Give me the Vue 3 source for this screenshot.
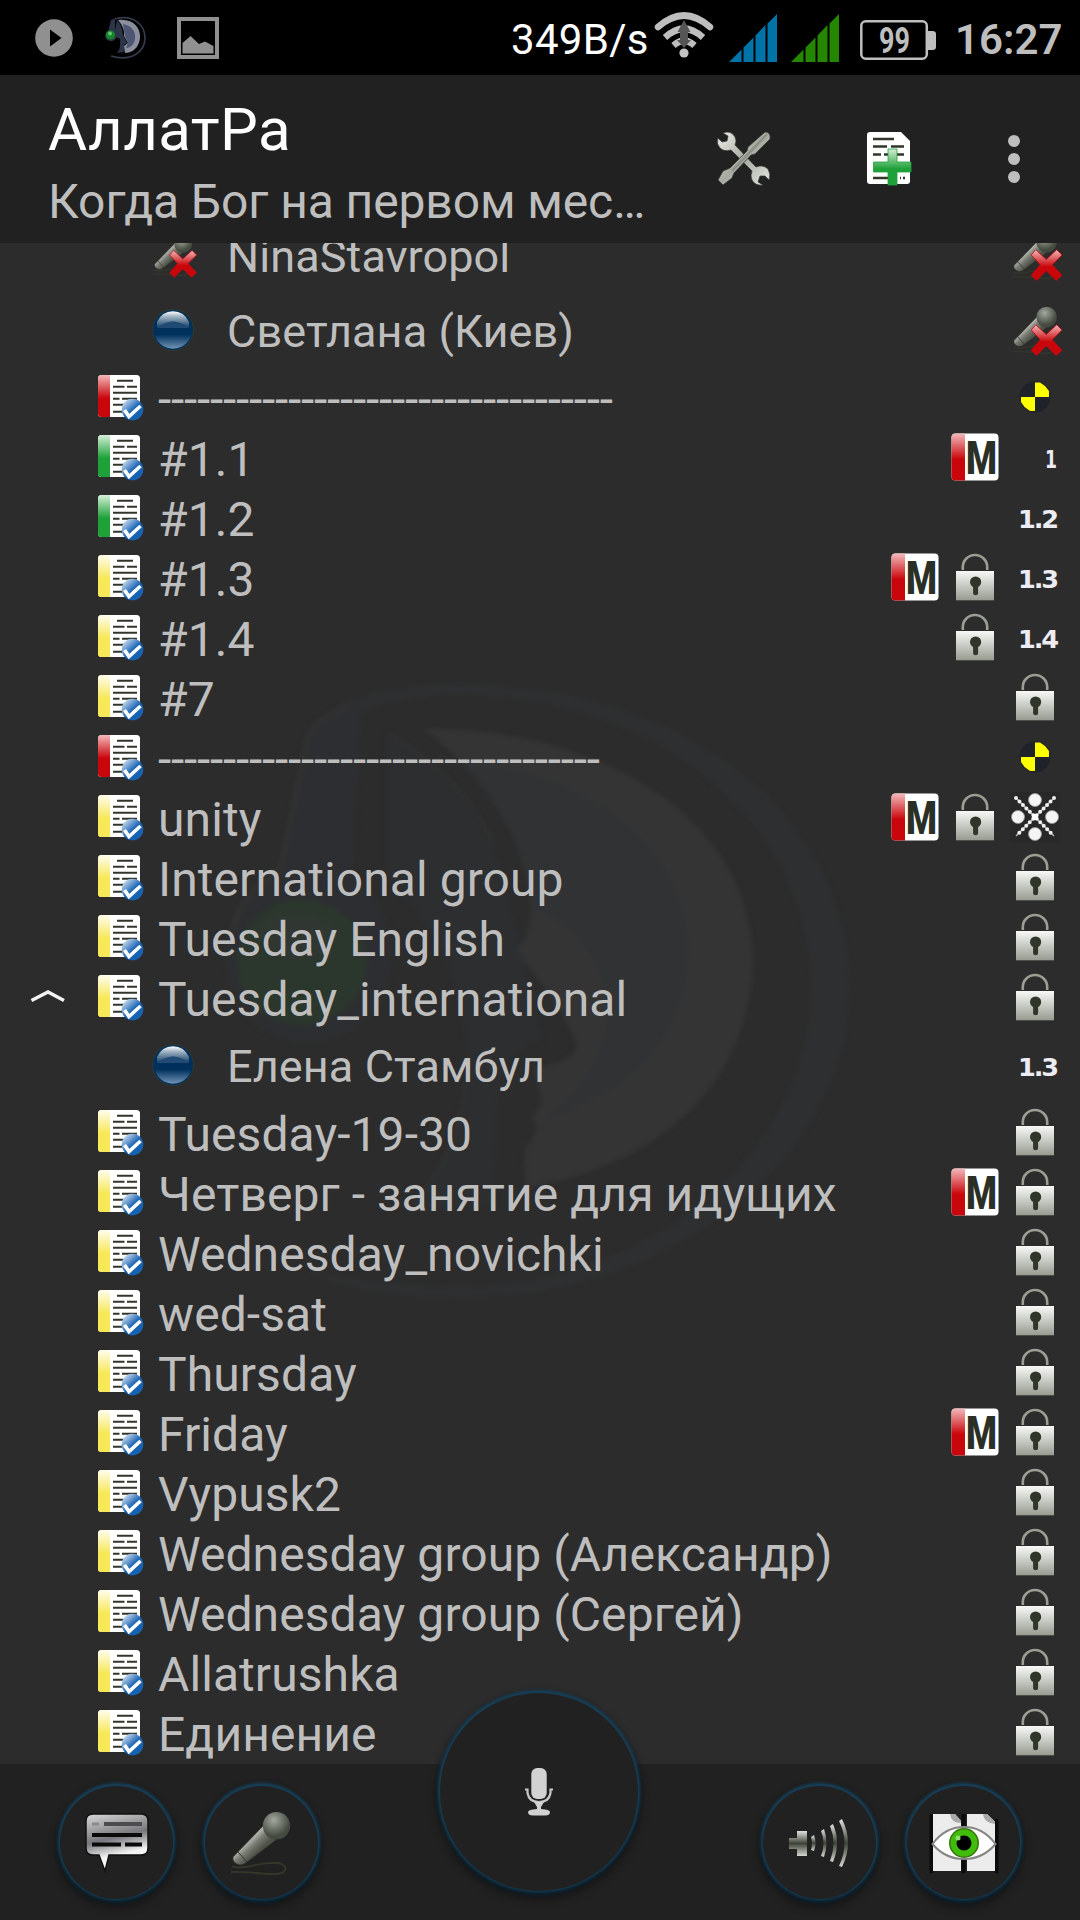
<script setup>
const rows = [
  { user: true, name: 'NinaStavropol', icon: 'muted', right: ['muted'] },
  { user: true, name: 'Светлана (Киев)', icon: 'orb', right: ['muted'] },
  { name: '-'.repeat(35), icon: 'red', right: ['target'], cls: 'dash' },
  { name: '#1.1', icon: 'green', right: ['moderated', 'n:1'] },
  { name: '#1.2', icon: 'green', right: ['n:1.2'] },
  { name: '#1.3', icon: 'yellow', right: ['moderated', 'lock', 'n:1.3'] },
  { name: '#1.4', icon: 'yellow', right: ['lock', 'n:1.4'] },
  { name: '#7', icon: 'yellow', right: ['lock'] },
  { name: '-'.repeat(34), icon: 'red', right: ['target'], cls: 'dash' },
  { name: 'unity', icon: 'yellow', right: ['moderated', 'lock', 'cross'] },
  { name: 'International group', icon: 'yellow', right: ['lock'] },
  { name: 'Tuesday English', icon: 'yellow', right: ['lock'] },
  { name: 'Tuesday_international', icon: 'yellow', right: ['lock'], open: true },
  { user: true, name: 'Елена Стамбул', icon: 'orb', right: ['n:1.3'] },
  { name: 'Tuesday-19-30', icon: 'yellow', right: ['lock'] },
  { name: 'Четверг - занятие для идущих', icon: 'yellow', right: ['moderated', 'lock'] },
  { name: 'Wednesday_novichki', icon: 'yellow', right: ['lock'] },
  { name: 'wed-sat', icon: 'yellow', right: ['lock'] },
  { name: 'Thursday', icon: 'yellow', right: ['lock'] },
  { name: 'Friday', icon: 'yellow', right: ['moderated', 'lock'] },
  { name: 'Vypusk2', icon: 'yellow', right: ['lock'] },
  { name: 'Wednesday group (Александр)', icon: 'yellow', right: ['lock'] },
  { name: 'Wednesday group (Сергей)', icon: 'yellow', right: ['lock'] },
  { name: 'Allatrushka', icon: 'yellow', right: ['lock'] },
  { name: 'Единение', icon: 'yellow', right: ['lock'] },
]
</script>

<template>
  <div class="screen">
    <svg class="defs" width="0" height="0">
      <defs>
        <linearGradient id="g-red" x1="0" y1="0" x2="0" y2="1"><stop offset="0" stop-color="#f3b9bb" /><stop offset=".55" stop-color="#c9060b" /></linearGradient>
        <linearGradient id="g-green" x1="0" y1="0" x2="0" y2="1"><stop offset="0" stop-color="#d6efd9" /><stop offset=".55" stop-color="#1ea139" /></linearGradient>
        <linearGradient id="g-yellow" x1="0" y1="0" x2="0" y2="1"><stop offset="0" stop-color="#fffdf0" /><stop offset=".55" stop-color="#f7e858" /></linearGradient>
        <linearGradient id="g-blue" x1=".15" y1=".1" x2=".8" y2=".8"><stop offset="0" stop-color="#c5d9ef" /><stop offset=".6" stop-color="#1762b2" /></linearGradient>
        <linearGradient id="g-lock" x1="0" y1="0" x2="0" y2="1"><stop offset="0" stop-color="#f8f9f7" /><stop offset="1" stop-color="#979b90" /></linearGradient>
        <linearGradient id="g-gloss" x1="0" y1="0" x2="0" y2="1"><stop offset="0" stop-color="#fff" /><stop offset=".3" stop-color="#fff" stop-opacity=".65" /><stop offset="1" stop-color="#fff" stop-opacity="0.05" /></linearGradient>
        <linearGradient id="g-orb" x1="0" y1="0" x2="0" y2="1"><stop offset="0" stop-color="#00305c" /><stop offset=".62" stop-color="#00305c" /><stop offset="1" stop-color="#7394b4" /></linearGradient>
        <radialGradient id="g-ball" cx=".4" cy=".3" r=".65"><stop offset="0" stop-color="#a3a79d" /><stop offset=".9" stop-color="#444a40" /></radialGradient>
        <linearGradient id="g-body" x1=".3" y1=".35" x2=".6" y2=".65"><stop offset="0" stop-color="#d2d4d0" /><stop offset=".55" stop-color="#777a70" /><stop offset="1" stop-color="#4d5147" /></linearGradient>
        <linearGradient id="g-metal" x1="0" y1="0" x2="1" y2="1"><stop offset="0" stop-color="#f2f2ef" /><stop offset=".5" stop-color="#a5a99f" /><stop offset="1" stop-color="#e6e7e4" /></linearGradient>
        <linearGradient id="g-chat" x1="0" y1="0" x2=".25" y2="1"><stop offset="0" stop-color="#d9d9da" /><stop offset=".5" stop-color="#77777b" /><stop offset=".65" stop-color="#b5b5b8" /><stop offset=".8" stop-color="#f5f5f5" /></linearGradient>
        <linearGradient id="g-spk" x1="0" y1="0" x2="0" y2="1"><stop offset="0" stop-color="#e2e3e0" /><stop offset=".5" stop-color="#3d4338" /><stop offset="1" stop-color="#d5d7d2" /></linearGradient>

        <symbol id="mic" viewBox="0 0 64 64" overflow="visible">
          <path d="M3 55 C10 60 30 51 48 52 C59 53 60 62 47 63 C36 64 22 60 2 61" fill="none" stroke="#34382b" stroke-width="1.8" />
          <path d="M35 14 L47 29 L18 51 Q15 54 11 54 Q3 52 4 46 Z" fill="url(#g-body)" stroke="#30342b" stroke-width=".7" />
          <path d="M9 41 L18 51 M35 14 L47 29" stroke="#30342b" stroke-width="1" />
          <circle cx="47.5" cy="14.8" r="13.7" fill="url(#g-ball)" />
        </symbol>
        <symbol id="muted" viewBox="0 0 64 64" overflow="visible">
          <use href="#mic" width="64" height="64" />
          <path d="M33 25 L47 38 L61 25 L68 32 L55 45 L68 59 L60 66 L47 53 L34 66 L27 59 L39 45 L27 32 Z" fill="url(#g-red)" stroke="#c9060b" stroke-width="1" />
        </symbol>
        <symbol id="orb" viewBox="0 0 42 42" overflow="visible">
          <circle cx="21" cy="21" r="21" fill="#30382e" />
          <circle cx="21" cy="21" r="20" fill="#00305c" />
          <circle cx="21" cy="21" r="18.8" fill="url(#g-orb)" />
          <path d="M5 19 V13 Q10 2.3 21 2.3 Q32 2.3 37 13 V19 Q29 12.5 21 12.5 Q13 12.5 5 19Z" fill="url(#g-gloss)" />
          <path d="M5 19 Q13 12.5 21 12.5 Q29 12.5 37 19Z" fill="#5d7c9d" opacity=".35" />
        </symbol>
        <symbol id="page" viewBox="0 0 46 46" overflow="visible">
          <rect x="0" y="0" width="42" height="42" rx="3.5" fill="#fff" />
          <path d="M19 5.8H35 M15 11.8H26.5M29 11.8H39 M15 17.8H39 M15 23.8H21.5M24 23.8H39 M15 29.8H26 M15 36.8H24" stroke="#31362b" stroke-width="2.1" />
        </symbol>
        <symbol id="tick" viewBox="0 0 46 46" overflow="visible">
          <circle cx="34.5" cy="34.5" r="10.8" fill="url(#g-blue)" />
          <path d="M26.5 35 L31 41.5 L42.5 31" fill="none" stroke="#fff" stroke-width="3.6" />
        </symbol>
        <symbol id="red" viewBox="0 0 46 46" overflow="visible">
          <use href="#page" width="46" height="46" /><path d="M12 0H3.5Q0 0 0 3.5V38.5Q0 42 3.5 42H12Z" fill="url(#g-red)" /><use href="#tick" width="46" height="46" />
        </symbol>
        <symbol id="green" viewBox="0 0 46 46" overflow="visible">
          <use href="#page" width="46" height="46" /><path d="M12 0H3.5Q0 0 0 3.5V38.5Q0 42 3.5 42H12Z" fill="url(#g-green)" /><use href="#tick" width="46" height="46" />
        </symbol>
        <symbol id="yellow" viewBox="0 0 46 46" overflow="visible">
          <use href="#page" width="46" height="46" /><path d="M12 0H3.5Q0 0 0 3.5V38.5Q0 42 3.5 42H12Z" fill="url(#g-yellow)" /><use href="#tick" width="46" height="46" />
        </symbol>
        <symbol id="lock" viewBox="0 0 48 48" overflow="visible">
          <path d="M11.8 17 V14 A12.2 12 0 0 1 36.2 14 V17" fill="none" stroke="#9a9e93" stroke-width="2.6" />
          <rect x="5" y="18" width="38" height="29.3" fill="url(#g-lock)" />
          <circle cx="24.6" cy="29" r="5.6" fill="#31362b" />
          <path d="M24.6 30V39.8" stroke="#31362b" stroke-width="5" stroke-linecap="round" />
        </symbol>
        <symbol id="target" viewBox="0 0 48 48" overflow="visible">
          <circle cx="24" cy="24" r="15.5" fill="#1f2228" />
          <path d="M24 24V9.5H29L34 13L38 18V24Z M24 24V38H19L13.5 34L10 29V24Z" fill="#ff0" />
        </symbol>
        <symbol id="cross" viewBox="0 0 48 48" overflow="visible">
          <rect x="-1" y="-1" width="50" height="50" fill="#222" opacity=".4" />
          <path d="M5 5L43 43M43 5L5 43" stroke="#aaa" stroke-width="1.6" />
          <path d="M5 5L43 43M43 5L5 43" stroke="#eee" stroke-width="4" stroke-dasharray="0 4.9" stroke-linecap="round" />
          <g fill="#f4f4f4" stroke="#999" stroke-width=".8"><circle cx="24" cy="7" r="6.5" /><circle cx="24" cy="41" r="6.5" /><circle cx="7" cy="24" r="6.5" /><circle cx="41" cy="24" r="6.5" /></g>
          <rect x="21" y="21" width="6" height="6" fill="#fff" />
        </symbol>
      </defs>
    </svg>

    <header class="status">
      <svg class="s-play" width="38" height="38" viewBox="0 0 38 38"><circle cx="19" cy="19" r="18.8" fill="#909090" /><path d="M15 10.5V27.5L26.5 19Z" fill="#000" /></svg>
      <svg class="s-ts" width="42" height="42" viewBox="0 0 42 42">
        <path d="M10 2 C27 -3 40 7 40 21 C40 35 26 45 6 39" fill="none" stroke="#343b4d" stroke-width="1.7" />
        <path d="M13 3 C28 1 36 11 35 21 C34 31 27 36 20 36 L19 29 L23 26 L19 19 Q20 11 13 3Z" fill="#8b8e9c" />
        <path d="M18 7 C28 9 31 16 30 22 C29 28 25 31 21 31 L23 26 L20 19Z" fill="#4c5672" />
        <path d="M6 3 L10 1.5 L10 13 L12 3 Q17 8 18 18 L22 26 L19 28 L19 35 L12 36 Q16 32 15 22 L11 20 L3 15Z" fill="#2c3448" />
        <circle cx="6" cy="18.5" r="5.8" fill="#2c3448" /><circle cx="5.5" cy="18" r="4.6" fill="#16852a" /><circle cx="5" cy="16.5" r="1.9" fill="#64c46f" />
      </svg>
      <svg class="s-pic" width="42" height="42" viewBox="0 0 42 42"><rect x="2" y="2" width="38" height="38" fill="none" stroke="#909090" stroke-width="4" /><path d="M5.5 36.5V26L13.5 19L22 27L28 24.5L36.5 29V36.5Z" fill="#909090" /></svg>
      <span class="rate">349B/s</span>
      <svg class="s-wifi" width="60" height="46" viewBox="0 0 60 46">
        <g fill="none" stroke="#bebebe" stroke-width="6.5"><path d="M4 15Q30 -8 56 15" stroke-linecap="round" /><path d="M11 25.5Q30 8 49 25.5" /><path d="M19.5 33.5Q30 24 40.5 33.5" /></g>
        <path d="M30 8L36.5 20H34V28H37L30 36L23 28H26V20H23.5Z" fill="#555" /><circle cx="30" cy="41" r="4.6" fill="#c4c4c4" />
      </svg>
      <svg class="s-sig" width="48" height="48" viewBox="0 0 48 48"><path d="M0 48L12.5 35.5V48ZM14.5 33.5L24.5 23.5V48H14.5ZM26.5 21.5L36.5 11V48H26.5ZM38.5 9.5L48 0V48H38.5Z" fill="#0073a8" /></svg>
      <svg class="s-sig2" width="48" height="48" viewBox="0 0 48 48"><path d="M0 48L12.5 35.5V48ZM14.5 33.5L24.5 23.5V48H14.5ZM26.5 21.5L36.5 11V48H26.5ZM38.5 9.5L48 0V48H38.5Z" fill="#258700" /></svg>
      <svg class="s-bat" width="76" height="40" viewBox="0 0 76 40"><rect x="1.3" y="1.3" width="65.5" height="37.4" rx="4.5" fill="none" stroke="#bebebe" stroke-width="2.5" /><path d="M68 11H72.5Q76 11 76 14V27Q76 30 72.5 30H68Z" fill="#bebebe" /><text x="19" y="32.5" textLength="31" lengthAdjust="spacingAndGlyphs" class="bat">99</text></svg>
      <span class="clock">16:27</span>
    </header>

    <div class="bar">
      <div class="titles">
        <div class="title">АллатРа</div>
        <div class="sub">Когда Бог на первом мес…</div>
      </div>
      <svg class="a-tools" width="54" height="54" viewBox="0 0 54 54">
        <path d="M6 1 Q14 -2 18 5 Q20 9 18 13 L39 35 Q46 32 51 37 Q54 42 52 48 L48 44 L43 44 L41 50 L46 53 Q38 54 35 48 Q33 44 35 39 L14 18 Q7 20 3 16 Q-1 12 1 6 L5 10 L10 9 L11 4Z" fill="url(#g-metal)" stroke="#34382e" stroke-width=".7" />
        <path d="M48 0 Q54 0 53 7 L38 22 L34 23 L17 41 L15 46 L6 53 L1 48 L6 39 L13 36 L30 19 L31 15Z" fill="url(#g-metal)" stroke="#34382e" stroke-width=".8" />
        <path d="M50 2L15 39" stroke="#8c9086" stroke-width="2.5" />
      </svg>
      <svg class="a-add" width="46" height="54" viewBox="0 0 46 54">
        <path d="M3 0H34L43 9V49Q43 52 40 52H3Q0 52 0 49V3Q0 0 3 0Z" fill="#fff" />
        <path d="M6 7H27M6 14.5H20M24 14.5H37M6 22.5H14M17 22.5H37M6 46H22M33 46H34M36 46H38" stroke="#31362b" stroke-width="2.5" />
        <path d="M21 17H30V30H44V40H30V53H21V40H6.5V30H21Z" fill="url(#g-green)" stroke="#1ea139" stroke-width=".8" />
      </svg>
      <svg class="a-more" width="12" height="48" viewBox="0 0 12 48"><g fill="#bebebe"><circle cx="6" cy="6" r="6" /><circle cx="6" cy="24" r="6" /><circle cx="6" cy="42" r="6" /></g></svg>
    </div>

    <main class="list">
      <svg class="watermark" width="680" height="660" viewBox="0 0 1568 1568" preserveAspectRatio="none">
        <defs><filter id="soft" color-interpolation-filters="sRGB"><feGaussianBlur stdDeviation="5" /></filter></defs>
        <g filter="url(#soft)">
          <path d="M250 1455 C360 1500 490 1515 600 1513 C1100 1510 1495 1170 1495 780 C1495 380 1130 65 600 60 Q430 60 330 105 L350 130 Q470 78 610 82 C1080 90 1412 400 1412 780 C1412 1150 1060 1490 600 1490 Q420 1490 250 1455Z" fill="#2d2f31" stroke="#303030" stroke-width="6" />
          <path d="M185 500 L245 200 Q252 130 370 100 L350 520 Q430 560 440 690 C440 820 370 905 240 910 C130 900 60 810 60 700 Q65 560 185 500Z" fill="#2d2e31" stroke="#2e2f2f" stroke-width="6" />
          <path d="M185 500 L245 200 Q252 145 340 112" fill="none" stroke="#323232" stroke-width="12" />
          <path d="M75 640 Q100 545 185 500" fill="none" stroke="#323232" stroke-width="14" />
          <path d="M430 175 Q600 270 690 480 L745 690 L790 905 Q690 930 690 1030 L680 1300 L480 1310 Q600 1180 615 980 Q610 740 500 600 L430 520Z" fill="#2d2e30" />
          <path d="M430 175 Q590 260 680 440 M480 1310 Q600 1180 615 980" fill="none" stroke="#303130" stroke-width="8" />
          <path d="M515 163 C900 160 1275 360 1275 720 C1265 1010 1060 1200 750 1255 L748 1160 Q790 1120 765 1090 L788 1050 L770 970 Q870 950 868 915 C840 830 780 760 730 690 Q765 650 762 590 C760 440 660 280 515 163Z" fill="#343434" />
          <path d="M600 245 C900 270 1120 440 1124 690 C1120 900 980 1040 790 1090 Q930 1000 942 830 C935 700 850 620 770 590 C755 440 690 330 600 245Z" fill="#303234" />
          <circle cx="235" cy="718" r="150" fill="#2b362d" />
          <ellipse cx="225" cy="655" rx="90" ry="55" fill="#303632" />
        </g>
      </svg>

      <div v-for="(r, i) in rows" :key="i" class="row" :class="{ user: r.user }">
        <div class="expander">
          <svg v-if="r.open" width="36" height="14" viewBox="0 0 36 14"><path d="M1.5 11.5L18 3L34 11.5" fill="none" stroke="#f2f2f2" stroke-width="3.4" /></svg>
        </div>
        <svg class="kind"><use :href="'#' + r.icon" width="100%" height="100%" /></svg>
        <span class="name" :class="r.cls">{{ r.name }}</span>
        <div class="flags">
          <div v-for="(f, j) in r.right" :key="j" class="flag">
            <svg width="48" height="48" viewBox="0 0 48 48">
              <text v-if="f === 'n:1'" class="num" x="46" y="34.5" text-anchor="end" textLength="12" lengthAdjust="spacingAndGlyphs">1</text>
              <text v-else-if="f.startsWith('n:')" class="num tight" x="46" y="34.5" text-anchor="end" textLength="39" lengthAdjust="spacingAndGlyphs">{{ f.slice(2) }}</text>
              <g v-else-if="f === 'moderated'">
                <rect x=".5" y=".5" width="47" height="47" rx="4" fill="#fff" />
                <path d="M14 .5H4.5Q.5 .5 .5 4.5V43.5Q.5 47.5 4.5 47.5H14Z" fill="url(#g-red)" />
                <text class="mod" x="15" y="41" textLength="31" lengthAdjust="spacingAndGlyphs">M</text>
              </g>
              <use v-else :href="'#' + f" width="48" height="48" />
            </svg>
          </div>
        </div>
      </div>
    </main>

    <footer class="dock">
      <div class="round">
        <svg width="64" height="64" viewBox="0 0 64 64">
          <path d="M8 3H56Q63 3 63 10V37Q63 44 56 44H24L20 60L14 44H8Q1 44 1 37V10Q1 3 8 3Z" fill="url(#g-chat)" stroke="#111" stroke-width="1.5" />
          <path d="M19 13H57" stroke="#4c4c4e" stroke-width="4" /><path d="M7 13H14" stroke="#8a8a8d" stroke-width="3" />
          <path d="M7 24H57M7 33.5H36M40 33.5H57" stroke="#0a0a0a" stroke-width="4" />
        </svg>
      </div>
      <div class="round"><svg width="64" height="64"><use href="#mic" width="64" height="64" /></svg></div>
      <div class="space"></div>
      <div class="round">
        <svg width="64" height="64" viewBox="0 0 64 64">
          <path d="M2 27H10V20H20V45H10V38H2Z" fill="url(#g-spk)" />
          <g fill="url(#g-spk)"><path d="M24 26L27 24Q30 32 27 40L24 39Q26 32 24 26Z" /><path d="M34 20L37 18Q42 32 37 46L34 45Q39 32 34 20Z" /><path d="M43 15L46 13Q54 32 46 51L43 50Q50 32 43 15Z" /><path d="M52 10L55 8Q67 32 55 56L52 55Q63 32 52 10Z" /></g>
        </svg>
      </div>
      <div class="round">
        <svg width="66" height="64" viewBox="0 0 66 64">
          <path d="M.5 3V62M32.5 3V62M65.5 8V62" stroke="#0b0b0b" stroke-width="4" />
          <path d="M2 3H24L30 10V60H2ZM36 3H56L64 11V60H36Z" fill="#ececec" />
          <path d="M19 3H24L30 9.5V12Q20 12 19 3ZM52 3H56L64 10.5V13Q53 12 52 3Z" fill="#a9a9a9" />
          <path d="M1.5 33Q14 16 33 16Q52 16 64.5 33Q52 48 33 48Q14 48 1.5 33Z" fill="#fff" stroke="#858585" stroke-width="2" />
          <circle cx="33" cy="32" r="15" fill="#39740f" /><circle cx="33" cy="32" r="13.5" fill="#40bd0a" /><circle cx="33" cy="32" r="7.5" fill="#000" /><circle cx="27" cy="27" r="2.5" fill="#8fe070" />
        </svg>
      </div>
      <div class="round talk">
        <svg width="30" height="50" viewBox="0 0 30 50">
          <rect x="7.3" y="1" width="15.4" height="31" rx="6" fill="#d2d2d2" />
          <path d="M1 22.5H3.5V26Q5 35 15 35Q25 35 26.5 26V22.5H29" fill="none" stroke="#c9c9c9" stroke-width="2.2" />
          <path d="M10 35H20L17 40V42Q26 42.5 26 45Q26 48.5 21 48.5H9Q4 48.5 4 45Q4 42.5 13 42V40Z" fill="#d2d2d2" />
        </svg>
      </div>
    </footer>
  </div>
</template>

<style>
body { margin: 0; background: #2c2c2c; }
</style>

<style scoped>
.screen { width: 1080px; height: 1920px; display: flex; flex-direction: column; overflow: hidden; background: #2c2c2c; font-family: Roboto, "Noto Sans", sans-serif; color: #bebebe; }
.defs { position: absolute; }
svg { display: block; flex: none; overflow: visible; }

.status { height: 75px; flex: none; background: #000; display: flex; align-items: center; box-sizing: border-box; padding-left: 35px; }
.s-ts { margin-left: 32px; }
.s-pic { margin-left: 30px; }
.rate { width: 143px; margin-left: 292px; flex: none; font-size: 42px; line-height: 50px; letter-spacing: 0.3px; color: #fff; white-space: nowrap; padding-top: 4px; }
.s-wifi { margin-top: -5px; }
.s-sig { margin-left: 15px; }
.s-sig2 { margin-left: 14px; }
.s-bat { margin-left: 21px; margin-top: 4px; }
.bat { font: 700 36px Roboto, sans-serif; fill: #bebebe; }
.clock { margin-left: 19px; padding-top: 4px; font-size: 42px; line-height: 50px; font-weight: 600; white-space: nowrap; }

.bar { height: 168px; flex: none; background: #212121; display: flex; align-items: center; box-sizing: border-box; padding-left: 48px; }
.titles { width: 669px; flex: none; padding-top: 6px; }
.title { color: #fff; font-size: 60px; line-height: 72px; letter-spacing: 0.4px; white-space: nowrap; padding-top: 2px; }
.sub { font-size: 48px; line-height: 60px; letter-spacing: -0.1px; white-space: nowrap; padding-top: 6px; }
.a-add { margin-left: 96px; }
.a-more { margin-left: 95px; }

.list { position: relative; flex: none; height: 1521px; overflow: hidden; }
.watermark { position: absolute; left: 200px; top: 417px; }
.row { position: relative; height: 60px; display: flex; align-items: center; padding-right: 15px; }
.row.user { height: 75px; }
.row:first-of-type { margin-top: -26px; }
.expander { width: 98px; flex: none; box-sizing: border-box; padding-left: 30px; margin-top: -3px; }
.kind { width: 46px; height: 46px; margin-top: 2px; }
.user .kind { width: 42px; height: 42px; margin-left: 54px; margin-top: 0; }
.name { margin-left: 14px; font-size: 48px; line-height: 60px; letter-spacing: 0.08px; padding-top: 5px; white-space: nowrap; flex: 1; }
.name.dash { letter-spacing: -0.27px; }
.user .name { margin-left: 33px; font-size: 45px; letter-spacing: 0.1px; padding-top: 4px; }
.flags { display: flex; flex: none; }
.flag { width: 60px; display: flex; justify-content: center; }
.num { font: 700 24px "DejaVu Sans", sans-serif; fill: #ececf2; }
.num.tight { letter-spacing: -2px; }
.mod { font: 900 47px Roboto, sans-serif; fill: #2b3026; }

.dock { position: relative; height: 156px; flex: none; background: #212121; display: flex; align-items: flex-start; box-sizing: border-box; padding: 22px 60px 0 60px; }
.round { width: 113px; height: 113px; flex: none; border-radius: 50%; background: #212121; display: flex; align-items: center; justify-content: center; box-shadow: 0 -1px 3px 2px #17415a, 0 2px 4px 2px #0b2230, 0 5px 9px 3px #151515; }
.round + .round:not(.talk) { margin-left: 31.5px; }
.space { flex: 1; }
.talk { position: absolute; left: 440px; top: -71px; width: 198px; height: 198px; }
</style>
